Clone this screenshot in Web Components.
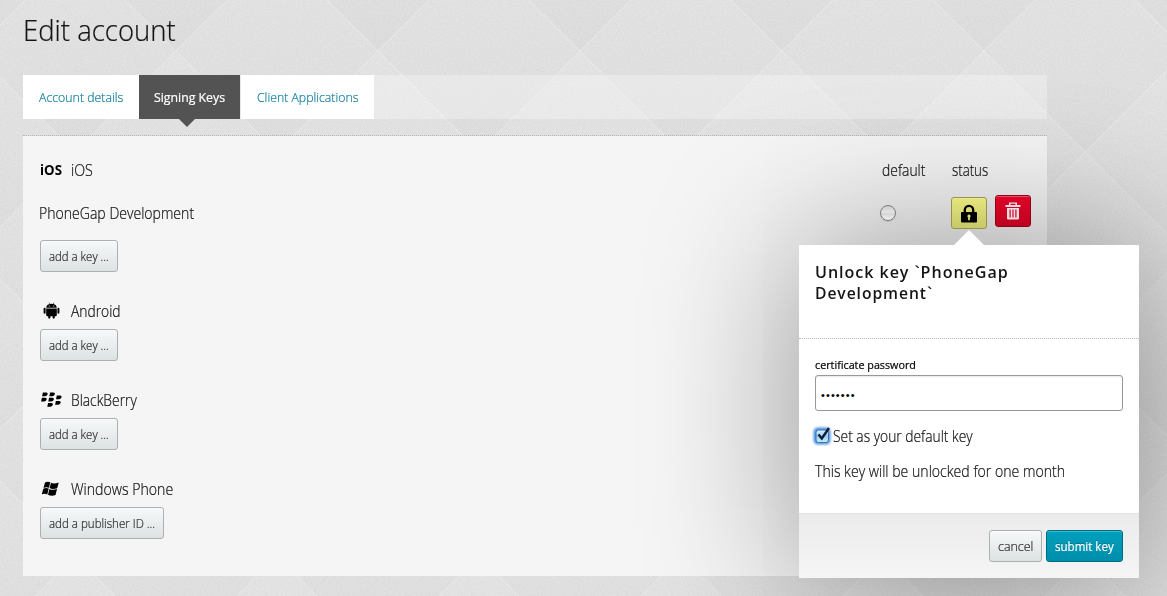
<!DOCTYPE html>
<html lang="en"><head><meta charset="utf-8"><title>Edit account</title>
<style>
html,body{margin:0;height:100%;overflow:hidden;background:#dedede}
body{font:300 15.5px/24px "Open Sans","Noto Sans",sans-serif;color:#141414;-webkit-text-stroke:.22px}
</style></head><body>
<account-page></account-page>
<script>
const define=(name,html,init)=>customElements.define(name,class extends HTMLElement{
  connectedCallback(){
    if(this.shadowRoot)return;
    const t=document.createElement('template');t.innerHTML=html;
    this.attachShadow({mode:'open'}).append(t.content.cloneNode(true));
    if(init)init(this,this.shadowRoot);
  }
});

/* A single line of text, condensed to a given width */
define('fit-text',`<style>:host{display:inline-block;white-space:nowrap;flex:none}
span{display:inline-block;transform-origin:0 50%}</style><span><slot></slot></span>`,(el,r)=>{
  const s=r.querySelector('span'),w=+el.getAttribute('w');
  el.style.width=w+'px';
  s.style.transform='scaleX('+(w/s.offsetWidth).toFixed(4)+')';
});

define('page-backdrop',`<style>:host{position:absolute;inset:0;z-index:-1}svg{display:block;width:100%;height:100%}</style>
<svg><defs>
<linearGradient id="g" x1="0" y1="0" x2="0" y2="1"><stop offset="0" stop-color="#e5e5e5"/><stop offset=".5" stop-color="#e2e2e2"/><stop offset="1" stop-color="#dedede"/></linearGradient>
<pattern id="p" x="75" y="-50" width="202" height="202" patternUnits="userSpaceOnUse">
<g fill="url(#g)">
<path d="M101-101 202 0 101 101 0 0Z"/><path d="M101 101 202 202 101 303 0 202Z"/>
<path d="M0 0 101 101 0 202-101 101Z"/><path d="M202 0 303 101 202 202 101 101Z"/></g>
<path d="M0 0 202 202M202 0 0 202" stroke="#ebebeb" stroke-width="1"/></pattern>
<filter id="n" x="0" y="0" width="100%" height="100%"><feTurbulence type="fractalNoise" baseFrequency=".55" numOctaves="2"/><feColorMatrix values="0 0 0 0 0  0 0 0 0 0  0 0 0 0 0  .06 0 0 0 -.02"/></filter>
</defs><rect width="100%" height="100%" fill="url(#p)"/><rect width="100%" height="100%" filter="url(#n)"/></svg>`);

define('tab-item',`<style>:host{display:flex;align-items:center;box-sizing:border-box;height:44px;padding:0 16px;background:#fff;color:#1580a0;font-size:13.5px;position:relative}
:host([active]){background:#535353;color:#fff;font-weight:400;padding:0 15px;margin-right:1px}
:host([active])::after{content:"";position:absolute;left:40px;top:44px;border:8px solid transparent;border-top-color:#535353;border-bottom:0}
</style><slot></slot>`);

define('tab-bar',`<style>:host{display:flex;height:44px;background:rgba(255,255,255,.3)}</style><slot></slot>`);

define('ui-button',`<style>:host{display:inline-flex;align-items:center;justify-content:center;box-sizing:border-box;height:32px;padding:0 8px;border:1px solid #adb0b0;border-radius:3px;background:linear-gradient(#f6f9f9,#dde2e2);box-shadow:inset 0 1px #fafcfc;color:#2b2b2b;font-size:13.5px}
:host([primary]){background:linear-gradient(#00a0bd,#008fab);border-color:#006d82;color:#fff;font-weight:400;box-shadow:inset 0 1px #38b7cd;text-shadow:0 -1px #006f85}
:host([kind]){width:36px;padding:0;position:relative;z-index:3}
:host([kind=lock]){background:linear-gradient(#e5e57d,#c7c869);border-color:#94954a;box-shadow:inset 0 1px #e9e995;margin-top:5px}
:host([kind=trash]){background:linear-gradient(#df0428,#bd0320);border-color:#8c0219;box-shadow:inset 0 1px #e8506a;margin-top:3px}
</style><slot></slot>`);

define('platform-icon',`<style>:host{display:block;width:31px;height:24px;flex:none}svg{display:block}
b{display:block;font:700 14.5px/24px "Open Sans",sans-serif;color:#000;-webkit-text-stroke:0}</style>`,(el,r)=>{
  const art={
    ios:'<b><fit-text w="22">iOS</fit-text></b>',
    android:`<svg width="31" height="24"><path d="M6.2 8.7C6.400 6.400 8 5.300 9.500 5l-.8-1.300.4-.3.9 1.500q1.500-.4 3 0l.9-1.500.4.3-.8 1.300c1.500.3 3.100 1.400 3.300 3.700Z"/><path d="M6.200 9.400h10.600v6.600a1.200 1.200 0 0 1-1.200 1.200h-.8v1.400a1.100 1.100 0 0 1-2.200 0v-1.400h-2.200v1.400a1.100 1.100 0 0 1-2.200 0v-1.400H7.400a1.200 1.200 0 0 1-1.200-1.200Z"/><rect x="3.600" y="8.700" width="2" height="6" rx="1"/><rect x="17.400" y="8.700" width="2" height="6" rx="1"/><circle cx="9.300" cy="7" r=".6" fill="#f4f4f4"/><circle cx="13.700" cy="7" r=".6" fill="#f4f4f4"/></svg>`,
    bb:'<svg width="31" height="24">'+[[2,4.5],[9.2,4.5],[1,9.7],[8.2,9.7],[15.9,7.5],[15,13],[7.200,15]].map(([x,y])=>`<path transform="translate(${x} ${y})" d="M.9 0H4.200Q6 .1 5.700 1.600 5.300 3.700 3.300 3.700H.1Z"/>`).join('')+'</svg>',
    win:`<svg width="31" height="24"><path d="M5 5.500Q7.500 4 10.300 5.300L8.900 10.700Q6.300 9.600 3.500 10.900ZM11 5.700Q13.800 7.300 18.700 5.500L17.200 11.200Q12.500 12.800 9.600 11ZM3.300 11.700Q6 10.500 8.700 11.600L7.300 17.400Q4.700 16.100 1.800 17.300ZM9.400 11.900Q12.500 13.700 17 12.100L15.500 18Q11.500 19.500 8 17.700Z"/></svg>`};
  r.append(document.createRange().createContextualFragment(art[el.getAttribute('name')]));
});

define('platform-section',`<style>:host{display:block;margin-bottom:26px}
header{display:flex;height:24px;box-sizing:border-box;padding-top:1.500px;align-items:center;margin-bottom:7px}
.cols{margin-left:auto;display:flex}</style>
<header><slot name="icon"></slot><slot name="name"></slot><div class="cols"><slot name="cols"></slot></div></header><slot></slot>`);

define('key-row',`<style>:host{display:flex;height:40px;margin:11px 0 8px -1px;line-height:42px}
.tools{margin-left:auto;width:151px;display:flex;align-items:flex-start;line-height:20px}
i{box-sizing:border-box;width:16px;height:16px;margin:13px 55px 0 0;border:1px solid #7c7c7c;border-radius:50%;background:linear-gradient(#d2d2d2 10%,#e4e4e4 50%,#d6d6d6 52%,#ececec);box-shadow:0 1px 1px #bbb;position:relative;z-index:3}
ui-button+ui-button{margin-left:8px}svg{display:block}</style>
<slot></slot><div class="tools"><i></i>
<ui-button kind="lock"><svg width="18" height="20"><path d="M4.800 10V7a4.200 4.200 0 0 1 8.400 0V10" fill="none" stroke="#000" stroke-width="2.300"/><rect x="1" y="9" width="16" height="10.500" rx="1"/><path d="M9 11.500a1.700 1.700 0 0 1 .9 3.100v2.600H8.100v-2.600A1.700 1.700 0 0 1 9 11.500Z" fill="#d9da72"/></svg></ui-button>
<ui-button kind="trash"><svg width="18" height="20" fill="#efdce0"><path d="M5 4V1.500h8v2.500h3.500v2h-15V4ZM6.500 4h5V2.800h-5Z" fill-rule="evenodd"/><path fill-rule="evenodd" d="M3 7h12v10.300a1.200 1.200 0 0 1-1.200 1.200H4.200A1.200 1.200 0 0 1 3 17.300ZM5.500 8.500v8h1.200v-8Zm2.900 0v8h1.200v-8Zm2.900 0v8h1.200v-8Z"/></svg></ui-button></div>`);

define('unlock-dialog',`<style>
:host{position:absolute;left:799px;top:245px;width:340px;height:333px;box-sizing:border-box;background:#fff;box-shadow:0 0 150px rgba(0,0,0,.42);z-index:2;display:flex;flex-direction:column}
:host::before{content:"";position:absolute;left:155px;top:-15px;border:15px solid transparent;border-bottom-color:#fff;border-top:0;z-index:4}
header{box-sizing:border-box;height:94px;padding:16px;border-bottom:1px dotted #b8b8b8;font-weight:600;font-size:17px;line-height:21px;letter-spacing:1px;-webkit-text-stroke:0}
header fit-text{display:block}
main{flex:1;padding:18px 16px 0;line-height:20px}
label{display:block;font-size:11.200px;line-height:16px;font-weight:400;color:#000}
.field{box-sizing:border-box;height:36px;margin:2px 0 15px;border:1px solid #989898;border-radius:3px;padding-left:5px;font:400 11px/38px "Liberation Sans",sans-serif;letter-spacing:1.100px;color:#000;box-shadow:inset 0 1px 1px #e8e8e8;-webkit-text-stroke:0}
.check{display:flex;margin-bottom:14.500px}
.check svg{margin:-2px 0 0 -4px;flex:none}
footer{box-sizing:border-box;height:65px;border-top:1px solid #e2e2e2;background:linear-gradient(#ebebeb,#f5f5f5);padding:16px;display:flex;justify-content:flex-end;gap:4px;line-height:20px}
</style>
<header><fit-text w="194">Unlock key \`PhoneGap</fit-text><fit-text w="118">Development\`</fit-text></header>
<main><label><fit-text w="101">certificate password</fit-text></label>
<div class="field"><fit-text w="35">•••••••</fit-text></div>
<div class="check"><svg width="22" height="22"><defs><linearGradient id="c" x1="0" y1="0" x2="0" y2="1"><stop stop-color="#e0effc"/><stop offset=".5" stop-color="#9accf3"/><stop offset="1" stop-color="#c7f0ff"/></linearGradient><filter id="b" x="-30%" y="-30%" width="160%" height="160%"><feGaussianBlur stdDeviation="1"/></filter></defs><rect x="2.500" y="3.500" width="17" height="17" rx="4.500" fill="#4d94de" filter="url(#b)"/><rect x="5" y="6" width="12.500" height="12.500" rx="2.500" fill="url(#c)" stroke="#3e6fb1"/><path d="M7.500 10.500 10.800 14.500 18 4" fill="none" stroke="#0c1c33" stroke-width="2.400"/></svg><fit-text w="140">Set as your default key</fit-text></div>
<fit-text w="250">This key will be unlocked for one month</fit-text></main>
<footer><ui-button><fit-text w="35">cancel</fit-text></ui-button><ui-button primary><fit-text w="59">submit key</fit-text></ui-button></footer>`);

define('account-page',`<style>
:host{display:block;position:relative;z-index:0;width:1167px;height:596px;overflow:hidden}
.content{width:1024px;margin-left:23px}
h1{margin:0;box-sizing:border-box;height:75px;padding-top:10px;font-weight:300;font-size:29.500px;line-height:40px}
.panel{box-sizing:border-box;height:441px;margin-top:16px;padding:21px 16px 0 17px;border-top:1px dotted #b4b4b4;background:#f5f5f5;background-clip:padding-box}
</style>
<page-backdrop></page-backdrop>
<div class="content"><h1><fit-text w="153">Edit account</fit-text></h1>
<tab-bar><tab-item><fit-text w="84">Account details</fit-text></tab-item><tab-item active><fit-text w="71">Signing Keys</fit-text></tab-item><tab-item><fit-text w="101">Client Applications</fit-text></tab-item></tab-bar>
<div class="panel">
<platform-section><platform-icon slot="icon" name="ios"></platform-icon><fit-text slot="name" w="22">iOS</fit-text><fit-text slot="cols" w="43" style="margin-right:27px">default</fit-text><fit-text slot="cols" w="36" style="margin-right:43px">status</fit-text>
<key-row><fit-text w="155">PhoneGap Development</fit-text></key-row><ui-button><fit-text w="60">add a key …</fit-text></ui-button></platform-section>
<platform-section><platform-icon slot="icon" name="android"></platform-icon><fit-text slot="name" w="50">Android</fit-text><ui-button><fit-text w="60">add a key …</fit-text></ui-button></platform-section>
<platform-section><platform-icon slot="icon" name="bb"></platform-icon><fit-text slot="name" w="66">BlackBerry</fit-text><ui-button><fit-text w="60">add a key …</fit-text></ui-button></platform-section>
<platform-section><platform-icon slot="icon" name="win"></platform-icon><fit-text slot="name" w="102">Windows Phone</fit-text><ui-button><fit-text w="106">add a publisher ID …</fit-text></ui-button></platform-section>
</div></div>
<unlock-dialog></unlock-dialog>`);
</script></body></html>
